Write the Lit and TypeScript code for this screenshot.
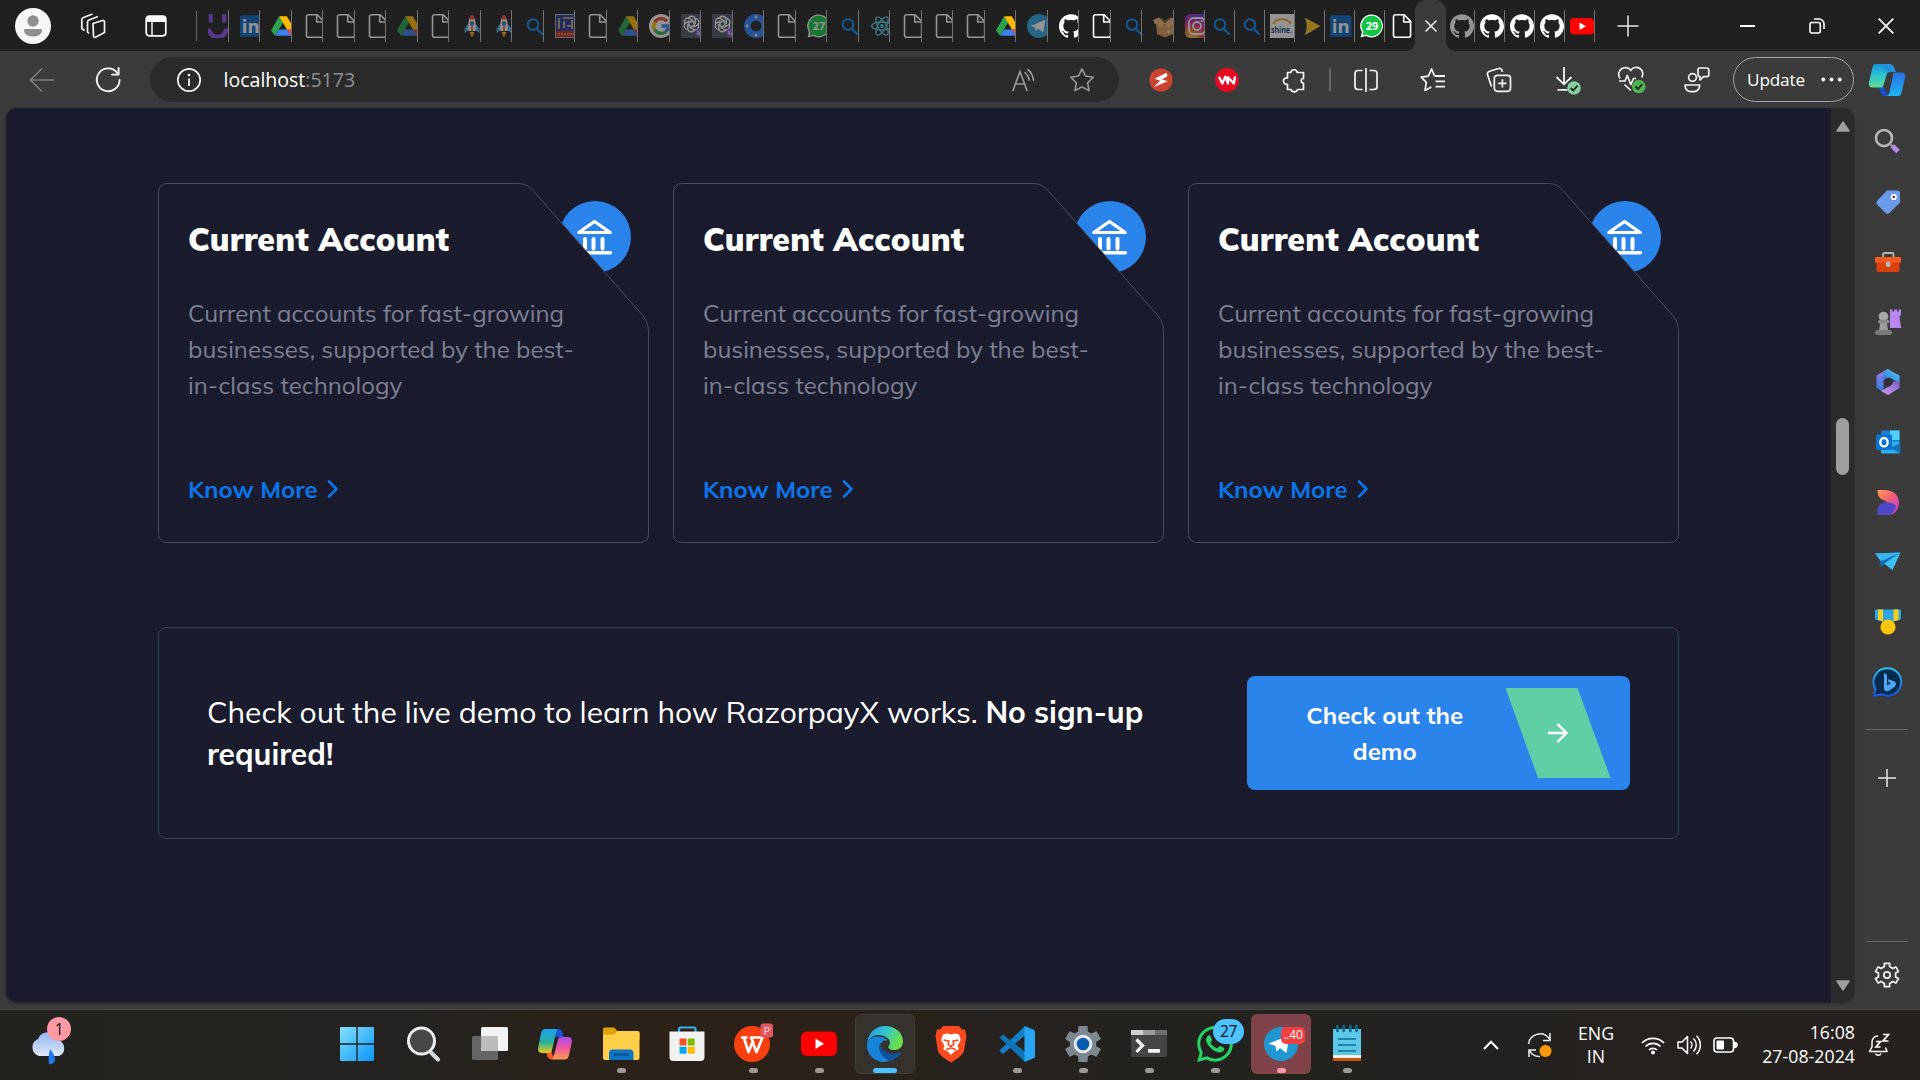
import { LitElement, html, css, svg, nothing } from "lit";
import { customElement, property } from "lit/decorators.js";

/* ---------- icon helpers ---------- */

const ic = (w: number, h: number, body: unknown, vb = `0 0 ${w} ${h}`) =>
  html`<svg class="ic" width=${w} height=${h} viewBox=${vb} fill="none">${body}</svg>`;

const gearPath = (c: number, outer: number, inner: number, n: number, wide = 0.3) => {
  const pts: string[] = [];
  const step = (Math.PI * 2) / n;
  for (let i = 0; i < n; i++) {
    const a = i * step - Math.PI / 2;
    const ring: [number, number][] = [
      [a - step * (0.5 - wide * 0.62), inner],
      [a - step * wide * 0.62, outer],
      [a + step * wide * 0.62, outer],
      [a + step * (0.5 - wide * 0.62), inner],
    ];
    for (const [t, r] of ring) pts.push(`${(c + r * Math.cos(t)).toFixed(2)} ${(c + r * Math.sin(t)).toFixed(2)}`);
  }
  return `M${pts.join("L")}Z`;
};

const GITHUB =
  "M12 .297c-6.63 0-12 5.373-12 12 0 5.303 3.438 9.8 8.205 11.385.6.113.82-.258.82-.577 0-.285-.01-1.04-.015-2.04-3.338.724-4.042-1.61-4.042-1.61C4.422 18.07 3.633 17.7 3.633 17.7c-1.087-.744.084-.729.084-.729 1.205.084 1.838 1.236 1.838 1.236 1.07 1.835 2.809 1.305 3.495.998.108-.776.417-1.305.76-1.605-2.665-.3-5.466-1.332-5.466-5.93 0-1.31.465-2.38 1.235-3.22-.135-.303-.54-1.523.105-3.176 0 0 1.005-.322 3.3 1.23.96-.267 1.98-.399 3-.405 1.02.006 2.04.138 3 .405 2.28-1.552 3.285-1.23 3.285-1.23.645 1.653.24 2.873.12 3.176.765.84 1.23 1.91 1.23 3.22 0 4.61-2.805 5.625-5.475 5.92.42.36.81 1.096.81 2.22 0 1.606-.015 2.896-.015 3.286 0 .315.21.69.825.57C20.565 22.092 24 17.592 24 12.297c0-6.627-5.373-12-12-12";
const WHATSAPP =
  "M17.472 14.382c-.297-.149-1.758-.867-2.03-.967-.273-.099-.471-.148-.67.15-.197.297-.767.966-.94 1.164-.173.199-.347.223-.644.075-.297-.15-1.255-.463-2.39-1.475-.883-.788-1.48-1.761-1.653-2.059-.173-.297-.018-.458.13-.606.134-.133.298-.347.446-.52.149-.174.198-.298.298-.497.099-.198.05-.371-.025-.52-.075-.149-.669-1.612-.916-2.207-.242-.579-.487-.5-.669-.51-.173-.008-.371-.01-.57-.01-.198 0-.52.074-.792.372-.272.297-1.04 1.016-1.04 2.479 0 1.462 1.065 2.875 1.213 3.074.149.198 2.096 3.2 5.077 4.487.709.306 1.262.489 1.694.625.712.227 1.36.195 1.871.118.571-.085 1.758-.719 2.006-1.413.248-.694.248-1.289.173-1.413-.074-.124-.272-.198-.57-.347m-5.421 7.403h-.004a9.87 9.87 0 01-5.031-1.378l-.361-.214-3.741.982.998-3.648-.235-.374a9.86 9.86 0 01-1.51-5.26c.001-5.45 4.436-9.884 9.888-9.884 2.64 0 5.122 1.03 6.988 2.898a9.825 9.825 0 012.893 6.994c-.003 5.45-4.437 9.884-9.885 9.884m8.413-18.297A11.815 11.815 0 0012.05 0C5.495 0 .16 5.335.157 11.892c0 2.096.547 4.142 1.588 5.945L.057 24l6.305-1.654a11.882 11.882 0 005.683 1.448h.005c6.554 0 11.89-5.335 11.893-11.893a11.821 11.821 0 00-3.48-8.413z";

const waTab = (n: string) => svg`
  <path d="M12 .5A11.5 11.5 0 1 1 6 22.1L.6 23.6 1.9 18A11.5 11.5 0 0 1 12 .5Z" fill="#fff"/>
  <path d="M12 1.8A10.2 10.2 0 1 1 6.2 20.6L2.4 21.8 3.4 17.8A10.2 10.2 0 0 1 12 1.8Z" fill="#12c443"/>
  <text x="12" y="15.8" text-anchor="middle" class="t b" font-size="11" fill="#fff">${n}</text>`;

const petal = (n: number, f: (a: number) => unknown) => Array.from({ length: n }, (_, i) => f((360 / n) * i));

/* favicons on a 24 x 24 grid */
const FAV: Record<string, unknown> = {
  smile: svg`<path d="M.8.2H4.800V8.500H.8ZM14 .2h4.300v8.300H14Z" fill="#8352f0"/><path d="M1 14.500A8.500 8.500 0 0 0 18.200 14.500" stroke="#8352f0" stroke-width="4.500"/>`,
  linkedin: svg`<rect x="0" y="1.300" width="21.500" height="21.500" rx="1.600" fill="#0a66c2"/><text x="10.700" y="18.800" text-anchor="middle" class="t b" font-size="18.500" fill="#fff">in</text>`,
  drive: svg`<path d="M8.200 2.200 0 16.200 4 21.800 12.300 8.200Z" fill="#2ba24c"/><path d="M8.200 2.200H15.800L24 16.200H16.300Z" fill="#ffba00"/><path d="M4.200 21.800 8 15.500H24L20 21.800Z" fill="#3b7ff0"/><path d="M15.900 15.500H24L20 21.800Z" fill="#ea4335"/>`,
  file: svg`<path d="M5.500.8H14.200L20.600 7.400V21.200A2 2 0 0 1 18.600 23.200H5.500A2 2 0 0 1 3.500 21.200V2.800A2 2 0 0 1 5.500.8ZM13.700 1V8H20.500" stroke="#fff" stroke-width="1.600" stroke-linejoin="round"/>`,
  rocket: svg`<path d="M8 10 4.600 14.500V19L9 16M16 10l3.400 4.500V19L15 16" fill="#4fb0ea"/><path d="M12 .8C8.500 4.500 7.600 9 8.400 17H15.600C16.400 9 15.500 4.500 12 .8Z" fill="#f2f6f9"/><path d="M12 .8C10.600 2.300 9.700 3.800 9.200 5.400H14.800C14.300 3.800 13.400 2.300 12 .8Z" fill="#ff4630"/><circle cx="12" cy="9.500" r="2.200" fill="#2e7db5"/><path d="M12 11.500v6" stroke="#ff4630" stroke-width="1.600"/><path d="M9.500 18H14.500L12 23.600Z" fill="#ffae2b"/>`,
  search: svg`<circle cx="10" cy="10.500" r="5.300" stroke="#0f8af5" stroke-width="2"/><path d="M14 14.800 19 20" stroke="#0f8af5" stroke-width="2.400" stroke-linecap="round"/>`,
  crest: svg`<rect x=".5" y=".5" width="22" height="23" fill="#27389b" stroke="#aab" stroke-width="1"/><path d="M4 4v11M8 4h10M9 7v7M12 12h6M17 6v9" stroke="#d9c16f" stroke-width="1.600"/><path d="M1 17H22v6H1Z" fill="#c02a20"/><path d="M3 20H20" stroke="#d8a33a" stroke-width="1.400" stroke-dasharray="2 1"/>`,
  google: svg`<circle cx="12" cy="12" r="12" fill="#fff"/><path d="M17.800 7.300A7.500 7.500 0 0 0 5.800 8" stroke="#ea4335" stroke-width="3.400"/><path d="M5.800 8A7.500 7.500 0 0 0 5.700 15.800" stroke="#fbbc05" stroke-width="3.400"/><path d="M5.700 15.800A7.500 7.500 0 0 0 16.800 17.700" stroke="#34a853" stroke-width="3.400"/><path d="M16.800 17.700A7.500 7.500 0 0 0 19.400 12H12.500" stroke="#4285f4" stroke-width="3.400"/>`,
  gpt: svg`<rect width="24" height="24" fill="#4d5566"/>${petal(6, (a) => svg`<path d="M7.200 4.800A3.800 3.800 0 0 1 14.300 4.600L14.300 9.200 10.500 7.200" stroke="#fff" stroke-width="1.300" transform="rotate(${a} 10.500 10)"/>`)}<circle cx="18.500" cy="18.500" r="4" fill="#8a5bd8"/><path d="M17 17v3h3" stroke="#fff" stroke-width="1"/>`,
  wheel: svg`<circle cx="12" cy="12" r="8.600" stroke="#2f80ff" stroke-width="6.600"/>${petal(4, (a) => svg`<circle cx="12" cy="3" r="1.400" fill="#d6e6ff" transform="rotate(${a} 12 12)"/>`)}`,
  wa27: waTab("27"),
  wa29: waTab("29"),
  react: svg`<circle cx="12" cy="12" r="2" fill="#58c4dc"/>${petal(3, (a) => svg`<ellipse cx="12" cy="12" rx="10.300" ry="4" stroke="#58c4dc" stroke-width="1.400" transform="rotate(${a / 2} 12 12)"/>`)}`,
  telegram: svg`<circle cx="12" cy="12" r="12" fill="#2ca5e0"/><path d="M3.600 12 18.500 5.800 16.200 18.600 11.200 14.800 8.800 17.200 8.300 13.500Z" fill="#fff"/>`,
  github: svg`<path d=${GITHUB} fill="#fff"/>`,
  box: svg`<path d="M3 8.500 12 11 21 8.500 20 20 12 23.600 4 20Z" fill="#d99a5c"/><path d="M3 8.500 6.500 3 12 6.500 17.500 3 21 8.500 12 11Z" fill="#8a5a2e"/><path d="M0 6 5.500 3.500 12 9.500 9 13.500 1.500 9.500ZM24 6 18.500 3.500 12 9.500 15 13.500 22.500 9.500Z" fill="#ecb97d"/><path d="M13.500 17.500 15.500 15.500 17.500 17.500 15.500 20Z" fill="#e8d2b5"/>`,
  instagram: svg`<defs><radialGradient id="ig" cx=".25" cy="1.050" r="1.150"><stop offset="0" stop-color="#ffd95a"/><stop offset=".3" stop-color="#fa7a24"/><stop offset=".6" stop-color="#d6249f"/><stop offset="1" stop-color="#5b3fdc"/></radialGradient></defs><rect width="24" height="24" rx="5.500" fill="url(#ig)"/><rect x="4" y="4" width="16" height="16" rx="4.500" stroke="#fff" stroke-width="1.800"/><circle cx="12" cy="12" r="4" stroke="#fff" stroke-width="1.800"/><circle cx="16.800" cy="7.200" r="1.100" fill="#fff"/>`,
  shine: svg`<rect width="26" height="24" fill="#fff"/><path d="M3 10A11 11 0 0 1 21 10" stroke="#f5a623" stroke-width="2"/><text x="1" y="18.600" class="t b" font-size="9.500" textLength="21" lengthAdjust="spacingAndGlyphs" fill="#223a78">shine.</text>`,
  arrow: svg`<path d="M4.500 3.500 20.500 12 4.500 21.500C7.500 15.500 7.500 9 4.500 3.500Z" fill="#ffc421"/>`,
  youtube: svg`<rect x="0" y="4" width="24" height="16.500" rx="4" fill="#f00"/><path d="M9.500 8.500 16 12.200 9.500 16Z" fill="#fff"/>`,
};

/* a leading "*" marks a tab that is awake */
const TABS_A = "smile linkedin *drive file file file drive file rocket rocket search crest file drive google gpt gpt wheel file wa27 search react file file file *drive telegram *github *file search box instagram".split(" ");
const TABS_B = "search search shine arrow linkedin *wa29 *file".split(" ");
const TABS_C = "github *github *github *github *youtube".split(" ");

const W = "#f4f4f4";

/* toolbar icons */
const TB = {
  back: ic(26, 26, svg`<path d="M25 13H2M13 1.500 1.500 13 13 24.500" stroke="#7f7f7f" stroke-width="1.600"/>`),
  refresh: ic(28, 28, svg`<path d="M23.500 7.200A11.400 11.400 0 1 0 25.600 14" stroke="${W}" stroke-width="1.900" stroke-linecap="round"/><path d="M24.600 2V8.600H18" stroke="${W}" stroke-width="1.900" stroke-linecap="round" stroke-linejoin="round"/>`),
  info: ic(26, 26, svg`<circle cx="13" cy="13" r="11.200" stroke="${W}" stroke-width="1.700"/><path d="M13 11.500V19" stroke="${W}" stroke-width="1.800"/><circle cx="13" cy="8" r="1.300" fill="${W}"/>`),
  aloud: ic(26, 26, svg`<path d="M2 23.500 9 4.500 16 23.500M4.500 17H13.500" stroke="#9b9b9b" stroke-width="1.600" stroke-linecap="round"/><path d="M14 5.500Q17.500 8.500 18.300 13M16.800 2.500Q21.500 6 22.600 13.500" stroke="#9b9b9b" stroke-width="1.600" stroke-linecap="round"/>`),
  star: ic(26, 26, svg`<path d="M13 1.800 16.500 9 24.300 10.200 18.700 15.700 20 23.600 13 19.900 6 23.600 7.300 15.700 1.700 10.200 9.500 9Z" stroke="#9b9b9b" stroke-width="1.600" stroke-linejoin="round"/>`),
  bolt: ic(24, 24, svg`<circle cx="12" cy="12" r="11.600" fill="#cb4331"/><path d="M17.500 4.800 5.500 10.800 11.200 12.800 4.800 19 18.800 13.300 13 11.400 18.500 8Z" fill="#fff"/>`),
  vn: ic(24, 24, svg`<circle cx="12" cy="12" r="11.900" fill="#e60a20"/><path d="M4 8.800 7.300 15.500 10.300 8.800 13 15.500V9.200L18.800 15.500 20 8.500" stroke="#fff" stroke-width="2.300" stroke-linejoin="round"/>`),
  puzzle: ic(26, 26, svg`<path d="M6.500 5.500H9.700A3.300 3.300 0 0 1 16.200 5.500H22.500V11.500A2 2 0 0 0 22.500 16V22.500H16.500A3.400 3.400 0 0 1 10 22.500H6.500V17.300A3.300 3.300 0 1 1 6.500 10.900Z" stroke="${W}" stroke-width="1.700" stroke-linejoin="round"/>`),
  split: ic(26, 26, svg`<path d="M13 1V25M9.500 3.500H5A3 3 0 0 0 2 6.500V19.500A3 3 0 0 0 5 22.500H9.500M16.500 3.500H21A3 3 0 0 1 24 6.500V19.500A3 3 0 0 1 21 22.500H16.500" stroke="${W}" stroke-width="1.700"/>`),
  fav: ic(26, 26, svg`<path d="M15.500 8.800 12.600 2 9.300 9.200 2.200 10.200 7.300 15.400 6 23.500 12.300 20" stroke="${W}" stroke-width="1.700" stroke-linejoin="round"/><path d="M15.500 9H26M16.500 14.300H26M16.500 19.600H26" stroke="${W}" stroke-width="1.800"/>`),
  coll: ic(26, 26, svg`<rect x="8.300" y="8.300" width="16.200" height="16" rx="3" stroke="${W}" stroke-width="1.700"/><path d="M16.400 12.200V20.500M12.200 16.300H20.500" stroke="${W}" stroke-width="1.700"/><path d="M5.500 19.500 1.600 8A3 3 0 0 1 3.500 4.200L12.500 1.500A2.600 2.600 0 0 1 16 3.500L16.500 5" stroke="${W}" stroke-width="1.700"/>`),
  down: ic(28, 30, svg`<path d="M12 2V19M4.500 12 12 19.300 19.500 12M5.500 24.800H15.500" stroke="${W}" stroke-width="1.800"/><circle cx="22" cy="23" r="6.800" fill="#85cf9f"/><path d="M18.600 23 21.200 25.500 25.600 20.700" stroke="#222" stroke-width="1.800"/>`),
  heart: ic(29, 30, svg`<path d="M3 13.500A6.200 6.200 0 0 1 13.800 5.300 6.200 6.200 0 0 1 24.700 12.500M13.800 25.500 7.500 19.500" stroke="${W}" stroke-width="1.700"/><path d="M2 16H8L10.300 10.500 13.800 19.500 16.500 13.500H19" stroke="${W}" stroke-width="1.700" stroke-linejoin="round"/><circle cx="21.800" cy="21.500" r="6.800" fill="#4fb054"/><path d="M18.500 21.500 21 24 25.300 19.200" stroke="#222" stroke-width="1.800"/>`),
  people: ic(28, 28, svg`<circle cx="9.500" cy="11.500" r="3.900" stroke="${W}" stroke-width="1.700"/><path d="M2.200 19H16.500V20A5.500 5.500 0 0 1 11 25.600H8A5.500 5.500 0 0 1 2.200 20Z" stroke="${W}" stroke-width="1.700"/><path d="M16.500 2H24A1.800 1.800 0 0 1 25.800 4V8.800A1.800 1.800 0 0 1 24 10.700H20.500L17 14V10.500A1.800 1.800 0 0 1 15 8.800V4A1.800 1.800 0 0 1 16.500 2Z" stroke="${W}" stroke-width="1.700" stroke-linejoin="round"/>`),
  copilot: ic(38, 34, svg`<defs><linearGradient id="cpa" x1="0" y1="0" x2="0" y2="1"><stop offset="0" stop-color="#1496dc"/><stop offset=".5" stop-color="#2fc3d0"/><stop offset="1" stop-color="#62dd92"/></linearGradient><linearGradient id="cpb" x1="0" y1="0" x2="0" y2="1"><stop offset="0" stop-color="#2a6fe0"/><stop offset="1" stop-color="#1fb6f5"/></linearGradient></defs>
    <path d="M11 24H16L20 33H17C13 33 12.500 29 11 24Z" fill="#1c4fd0"/><path d="M8 1H21C25 1 26.500 5 27.500 9H22C20 9 19 10 18.500 12L15.500 22C15 24 14 24.500 12 24.500H5C1 24.500.4 22 1.200 18.500L4.500 4.500C5 2 6 1 8 1Z" fill="url(#cpa)"/><path d="M8 1H21C25 1 26.500 5 27.500 9H22C20 9 16 4 8 1Z" fill="#2293da"/><path d="M26 9.500H33C37 9.500 37.600 12 36.800 15.500L33.500 29.500C33 32 32 33 30 33H17.500C20 33 21 31 21.500 29L25 12C25 10.500 25 9.500 26 9.500Z" fill="url(#cpb)"/>`),
};

/* browser sidebar icons, 30 x 30 */
const SIDE = [
  svg`<circle cx="11" cy="11" r="8" stroke="#b9b9b9" stroke-width="2.600"/><path d="M17 17 20 20" stroke="#8d8d8d" stroke-width="2.500"/><path d="M19.500 19 25 24.500" stroke="#b78bec" stroke-width="5"/>`,
  svg`<path d="M14 3.500H24.500A2.500 2.500 0 0 1 27 6V15.500L16.500 26A3 3 0 0 1 12.500 26L4.500 18A3 3 0 0 1 4.500 13.500Z" fill="#6a9bea"/><circle cx="20.800" cy="10" r="2.200" fill="#3b3b3b" stroke="#fff" stroke-width="1.800"/>`,
  svg`<path d="M10 10V7.500A1.500 1.500 0 0 1 11.500 6H19A1.500 1.500 0 0 1 20.500 7.500V10" stroke="#b5b5b5" stroke-width="1.800"/><path d="M3.500 14H26.500V23A2 2 0 0 1 24.500 25H5.500A2 2 0 0 1 3.500 23Z" fill="#d9430b"/><path d="M3 10H27A1 1 0 0 1 28 11V15.500H2V11A1 1 0 0 1 3 10Z" fill="#f7581c"/><rect x="12.800" y="14.500" width="4.600" height="5.500" rx="2" fill="#b9b9b9"/>`,
  svg`<path d="M17 2.500H19.500V4.500H21.300V2.500H24V4.500H25.800V2.500H28V8L26.500 9.500 27.500 17.500 28.500 21H17Z" fill="#b888ee"/><circle cx="10.500" cy="9.500" r="4.800" fill="#a6a6a6"/><path d="M8 12H13.300L15 23H6Z" fill="#9d9d9d"/><rect x="5" y="13" width="11.500" height="3.500" rx="1.700" fill="#8b8b8b"/><rect x="2" y="23" width="17" height="5" rx="2.500" fill="#7a7a7a"/>`,
  svg`<defs><linearGradient id="m0" x1="0" y1="0" x2="0" y2="1"><stop offset="0" stop-color="#a777e0"/><stop offset="1" stop-color="#2f7de6"/></linearGradient><linearGradient id="m1" x1="0" y1="1" x2="1" y2="0"><stop offset="0" stop-color="#2565d8"/><stop offset="1" stop-color="#54d7f5"/></linearGradient><linearGradient id="m2" x1="0" y1="1" x2="1" y2="0"><stop offset="0" stop-color="#d19bf0"/><stop offset="1" stop-color="#7c5ac8"/></linearGradient></defs><path d="M3.500 8.500 14.500 2 17 3V10L10.500 14V22.500L8.500 24 3.500 20.500Z" fill="url(#m0)"/><path d="M14.500 2.200 26.500 8.500V16L20 12.500 14.500 9.500 10.500 13V5Z" fill="url(#m1)"/><path d="M26.500 14V21L15 28 8 24 18.500 18 20.500 14.500Z" fill="url(#m2)"/><circle cx="15" cy="15" r="4.200" fill="#303038"/>`,
  svg`<rect x="8" y="3.500" width="18.500" height="22" rx="1.500" fill="#1a7fd0"/><path d="M17 3.500H26.500V13H17Z" fill="#4fd0fa"/><path d="M8 14.500 26.500 14.500V26.500H8Z" fill="#2cb1f0"/><path d="M27.500 16 17 21 27.500 26.500Z" fill="#156fb9"/><rect x="3" y="7.500" width="16" height="15.500" rx="1.700" fill="#0a72cf"/><ellipse cx="11" cy="15.200" rx="3.700" ry="4.200" stroke="#fff" stroke-width="2.400"/>`,
  svg`<defs><linearGradient id="d1" x1="0" y1="0" x2="1" y2="1"><stop offset="0" stop-color="#ff9a52"/><stop offset=".5" stop-color="#f2597a"/><stop offset="1" stop-color="#b13cf0"/></linearGradient></defs><path d="M4.500 3H12C20 3 26 8 26 15.500 26 23 21 28 14.500 28 22 24 16 14.500 10 13 6 11.500 4.500 8 4.500 3Z" fill="url(#d1)"/><path d="M4.500 28V22.500C5 17 10 14.500 16 15.500 20 16 22.500 17.500 23 19 22 24 18 28 14.500 28Z" fill="#4f47c8"/>`,
  svg`<path d="M2 6.500 27.500 5.500 13 16Z" fill="#2196e8"/><path d="M6 20 8 12.500 27.500 5.500 12 17.500Z" fill="#1565b4"/><path d="M27.500 5.500 19.500 23 11 16.500Z" fill="#3bc0f2"/><path d="M2 6.500 8 14.500 27.500 5.500Z" fill="#37b5f1"/>`,
  svg`<path d="M3 2.500H27A1 1 0 0 1 28 3.500V11.500A2 2 0 0 1 26 13L15 16 4 13A2 2 0 0 1 2 11.500V3.500A1 1 0 0 1 3 2.500Z" fill="#2aa5e6"/><path d="M5 2.500H10V14.500L5 13ZM20.500 2.500H25.500V13L20.500 14.500Z" fill="#f8cf1c"/><circle cx="15" cy="20" r="7.600" fill="#fdc60a"/>`,
  svg`<defs><linearGradient id="bg1" x1="0" y1="0" x2="0" y2="1"><stop offset="0" stop-color="#27c2f2"/><stop offset="1" stop-color="#1b56de"/></linearGradient></defs><path d="M14.500 1.200A13.700 13.700 0 1 1 8.500 27.200L1 28.700 2.500 22A13.700 13.700 0 0 1 14.500 1.200Z" fill="#062b4e" stroke="url(#bg1)" stroke-width="1.900"/><path d="M11 6 14 7.500V18.500L18 16.300 15.500 15 14.700 12 21.500 14.500C23.500 15.500 23.200 18.500 21.500 20L15.500 24C13.500 25 11 23.500 11 21.500Z" fill="#4fa6f6"/>`,
];

/* taskbar icons, 38 x 44 */
const t = {
  start: svg`<defs><linearGradient id="w1" x1="0" y1="0" x2="1" y2="1"><stop offset="0" stop-color="#84e0fb"/><stop offset="1" stop-color="#0a95f8"/></linearGradient></defs><path d="M2 6A1 1 0 0 1 3 5H18.300V21.300H2ZM19.700 5H35A1 1 0 0 1 36 6V21.300H19.700ZM2 22.700H18.300V39H3A1 1 0 0 1 2 38ZM19.700 22.700H36V38A1 1 0 0 1 35 39H19.700Z" fill="url(#w1)"/>`,
  search: svg`<path d="M27.500 31 34 37.500" stroke="#d3d6da" stroke-width="4.200" stroke-linecap="round"/><circle cx="17.500" cy="19" r="13" fill="#4a4645" stroke="#eceef0" stroke-width="3"/>`,
  view: svg`<rect x="11" y="5" width="27" height="24" rx="1.500" fill="#f3f3f3"/><rect x="2" y="14" width="26" height="24" rx="1.500" fill="#686868" opacity=".95"/><path d="M11 14H28V29H11Z" fill="#bcbcbc"/>`,
  copilot: svg`<defs><linearGradient id="c1" x1="0" y1="0" x2="0" y2="1"><stop offset="0" stop-color="#199ff0"/><stop offset=".55" stop-color="#28b2a0"/><stop offset="1" stop-color="#f3c816"/></linearGradient><linearGradient id="c2" x1="0" y1="0" x2="0" y2="1"><stop offset="0" stop-color="#a94df0"/><stop offset=".5" stop-color="#f0589e"/><stop offset="1" stop-color="#ff9d4a"/></linearGradient></defs><path d="M17 7H22C26 7 26.500 10 27.500 15H20Z" fill="#1b54d8"/><path d="M9.500 28H15L18 37.500H15.500C11.500 37.500 11 33 9.500 28Z" fill="#f5562f"/><path d="M9 7H20C22 7 20.500 10 19.500 13L16 28C15.300 30.500 14 31 12 31H6C2 31 1.500 28 2.500 24L5 11C6 8 7 7 9 7Z" fill="url(#c1)"/><path d="M25 15H32C36 15 36.500 18 35.500 22L33 33C32 36.500 31 37.500 29 37.500H17.500C16 37.500 17.500 35 18.500 31L22 18C22.500 16 23 15 25 15Z" fill="url(#c2)"/>`,
  explorer: svg`<path d="M1 7A1.500 1.500 0 0 1 2.500 5.500H12L15.500 9H35.500A2 2 0 0 1 37.500 11V18H1Z" fill="#e0a008"/><path d="M1 12.500H12L15.500 9H35.500A2 2 0 0 1 37.500 11V36A2 2 0 0 1 35.500 38H3A2 2 0 0 1 1 36Z" fill="#ffcf48"/><path d="M7 31A3.500 3.500 0 0 1 10.500 27.500H28A3.500 3.500 0 0 1 31.500 31V38H7Z" fill="#0f74c4"/><path d="M12 32.500H26.500" stroke="#0a4b8d" stroke-width="2"/>`,
  store: svg`<path d="M11 12V7A1.500 1.500 0 0 1 12.500 5.500H26A1.500 1.500 0 0 1 27.500 7V12" stroke="#34b1ee" stroke-width="2.200"/><path d="M1.500 9.500H36.500V35A4 4 0 0 1 32.500 39H5.500A4 4 0 0 1 1.500 35Z" fill="#f2f2f2"/><path d="M11.500 16.500H18.500V23.500H11.500Z" fill="#f25022"/><path d="M19.700 16.500H26.700V23.500H19.700Z" fill="#7fba00"/><path d="M11.500 24.700H18.500V31.700H11.500Z" fill="#00a4ef"/><path d="M19.700 24.700H26.700V31.700H19.700Z" fill="#ffb900"/>`,
  wps: svg`<circle cx="18" cy="22" r="18" fill="#f8400e"/><path d="M7 15.500H13.500M10 16 14.500 30 18.500 20 22.500 30 28.500 15.500H17L19.500 21" stroke="#fff" stroke-width="2.700" stroke-linejoin="round"/><rect x="26.500" y="1.500" width="12.500" height="14" rx="2.500" fill="#e0555f"/><text x="32.700" y="12.800" text-anchor="middle" class="t" font-size="11" fill="#ffd9dc">P</text>`,
  yt: svg`<rect x="1" y="9.500" width="36" height="24.500" rx="6" fill="#f00"/><path d="M15.500 16.500 24 21.700 15.500 27Z" fill="#fff"/>`,
  edge: svg`<defs><linearGradient id="e1" x1="0" y1="0" x2="1" y2=".35"><stop offset="0" stop-color="#2490dc"/><stop offset=".5" stop-color="#2fc3d4"/><stop offset="1" stop-color="#6be04c"/></linearGradient></defs><path d="M1 24C1 12 8.500 4 19 4 29.500 4 37 11 37 19.500 37 25.500 32.500 28 28 28 24 28 22.300 26.300 22.300 25 22.300 24 24 23 24 20.500 24 17 19 13 12.500 13 6 13 1.500 17.500 1 24Z" fill="url(#e1)"/><path d="M1 22.500C1.500 17 6.500 14.500 11.500 14.500 17.500 14.500 21 17 22 18.500 18 17 13.500 20.500 13.500 26 13.500 31.500 19 36 26 36 23 39 20.500 40 18.500 40 8 40 .5 32 1 22.500Z" fill="#1784d8"/><path d="M14 21.500C11 30 17.500 37.500 25 39 30 37 34 33.500 35.500 30.800 35.800 30 35 29.700 34 30.200 28 33 17 31.500 15 24.500Z" fill="#1250a0"/>`,
  brave: svg`<path d="M11 4H27L30 7.500 33 7.500 34.500 14 32 29C31 33 24 37.500 19 40.500 14 37.500 7 33 6 29L3.500 14 5 7.500 8 7.500Z" fill="#fb4a1e"/><g transform="translate(3.400 4) scale(.82)"><path d="M9.500 10 15 9 19 10.500 23 9 28.500 10 31 17 27 24 28.500 28.500 23 31 19 35.500 15 31 9.500 28.500 11 24 7 17Z" fill="#fff"/><path d="M10 17 16.500 18.500 15.500 22.500 19 25 22.500 22.500 21.500 18.500 28 17M13 29 19 26.500 25 29" stroke="#fb4a1e" stroke-width="2"/></g>`,
  vscode: svg`<path d="M1.500 28.500 27 4 36.500 8 27.500 13 5 32Z" fill="#1380c8"/><path d="M1.500 15.500 5 12.500 28 30.500 27 40Z" fill="#0d74b8"/><path d="M26.500 4.200 36 8.200A1.500 1.500 0 0 1 37 9.500V34.500A1.500 1.500 0 0 1 36 36L26.500 40Z" fill="#27a5f2"/>`,
  settings: svg`<path d=${gearPath(19, 17.500, 12.500, 6, 0.32)} fill="#7d8790" stroke="#7d8790" stroke-width="2" stroke-linejoin="round" transform="translate(0 3)"/><circle cx="19" cy="22" r="7.800" fill="#0b5cad" stroke="#e5e9ed" stroke-width="3"/>`,
  term: svg`<rect x="1" y="8" width="36" height="27" rx="1.500" fill="#444"/><path d="M1 8H13V13H1Z" fill="#cfcfcf"/><path d="M13 8H25V13H13Z" fill="#9c9c9c"/><path d="M25 8H37V13H25Z" fill="#6f6f6f"/><path d="M6.500 17.500 12.500 23.500 6.500 30" stroke="#f0f0f0" stroke-width="3.300"/><rect x="18" y="27" width="12" height="3.800" rx=".8" fill="#f4f4f4"/>`,
  wa: svg`<g transform="translate(1 4) scale(1.500)"><path d=${WHATSAPP} fill="#25d366"/></g>`,
  tg: svg`<circle cx="19" cy="22" r="17" fill="#2197d1"/><path d="M6.500 21.500 27.500 13.500 24.500 31 18 26 14.500 29.500 13.500 24Z" fill="#fff"/>`,
  note: svg`<rect x="5" y="35" width="28" height="4" rx=".5" fill="#c2570c"/><path d="M5 33H33V36H5Z" fill="#f1efe8"/><path d="M5 7H33V33H5Z" fill="#5cc8e8"/><path d="M10 17H28M10 23H28M10 29H28" stroke="#0a6d92" stroke-width="1.700"/><path d="M9.500 4V9M15.700 4V9M22.300 4V9M28.500 4V9" stroke="#0b6d93" stroke-width="2.600" stroke-linecap="round"/>`,
};

interface Task { icon: unknown; run?: boolean; state?: "active" | "alert"; badge?: string }
const TASKS: Task[] = [
  { icon: t.start }, { icon: t.search }, { icon: t.view }, { icon: t.copilot },
  { icon: t.explorer, run: true }, { icon: t.store }, { icon: t.wps, run: true }, { icon: t.yt, run: true },
  { icon: t.edge, run: true, state: "active" }, { icon: t.brave }, { icon: t.vscode, run: true },
  { icon: t.settings, run: true }, { icon: t.term, run: true }, { icon: t.wa, run: true, badge: "27" },
  { icon: t.tg, run: true, state: "alert", badge: "..40" }, { icon: t.note, run: true },
];

const base = css`
  * { box-sizing: border-box; }
  .ic { display: block; flex: none; overflow: visible; }
  .t { font-family: "Open Sans", "Noto Sans", sans-serif; }
  .b { font-weight: 700; }
`;

@customElement("tab-strip")
class TabStrip extends LitElement {
  static styles = [base, css`
    :host { display: flex; height: 51px; background: #202020; align-items: center; }
    .cell { display: flex; justify-content: center; align-items: center; flex: none; }
    .avatar { width: 66px; }
    .spaces { width: 54px; }
    .acts { width: 76px; padding-right: 4px; }
    .sep { flex: none; width: 1.300px; height: 30px; background: #666; }
    .tab { flex: none; display: flex; align-items: center; height: 32px; width: 31.500px; padding-left: 10.800px; border-right: 1.300px solid #737373; overflow: hidden; }
    .tab .ic { overflow: hidden; }
    .slim { width: 30px; padding-left: 5px; }
    .last { border-right-color: transparent; }
    .dim .ic { opacity: .52; }
    .active { position: relative; flex: none; width: 31px; height: 51px; display: flex; align-items: center; justify-content: center; background: #3b3b3b; border-radius: 11px 11px 0 0; margin-right: -1px; }
    .active::before, .active::after { content: ""; position: absolute; bottom: 0; width: 9px; height: 9px; }
    .active::before { right: 100%; background: radial-gradient(circle at 0 0, transparent 8.500px, #3b3b3b 9px); }
    .active::after { left: 100%; background: radial-gradient(circle at 100% 0, transparent 8.500px, #3b3b3b 9px); }
    .plus { width: 66px; }
    .min { width: 70px; margin-left: 51px; }
    .win { width: 69px; }
  `];
  tab(name: string, slim = false, last = false) {
    const awake = name[0] === "*";
    return html`<div class="tab ${slim ? "slim" : ""} ${awake ? "" : "dim"} ${last ? "last" : ""}">${ic(24, 24, FAV[awake ? name.slice(1) : name])}</div>`;
  }
  render() {
    return html`
      <div class="cell avatar">${ic(36, 36, svg`<circle cx="18" cy="18" r="18" fill="#f7f7f7"/><circle cx="18" cy="13" r="5.700" fill="#8f8f8f"/><path d="M9.500 21.500H26.500V22.500C26.500 26 23 28 18 28S9.500 26 9.500 22.500Z" fill="#8f8f8f" stroke="#8f8f8f" stroke-width="1" stroke-linejoin="round"/>`)}</div>
      <div class="cell spaces">${ic(26, 26, svg`<path d="M13 10.500 22.500 7.500A1.500 1.500 0 0 1 24.500 9V19.500L16 24A1.500 1.500 0 0 1 13.500 22.500Z" stroke="${W}" stroke-width="1.700" stroke-linejoin="round"/><path d="M9 20.500 7.500 19V9A2.500 2.500 0 0 1 9 7L18 3.500M4.500 17.500 1.800 15.500V7A2.500 2.500 0 0 1 3.500 4.500L12.500 1" stroke="${W}" stroke-width="1.700"/>`)}</div>
      <div class="cell acts">${ic(22, 22, svg`<rect x="1.200" y="1.200" width="19.600" height="19.600" rx="3" stroke="#fff" stroke-width="1.700"/><path d="M1 4A3 3 0 0 1 4 1H18A3 3 0 0 1 21 4V7H1Z" fill="#fff"/><path d="M7 7V21" stroke="#fff" stroke-width="1.400"/>`)}</div>
      <div class="sep"></div>
      ${TABS_A.map((n) => this.tab(n))}
      ${TABS_B.map((n, i) => this.tab(n, true, i === TABS_B.length - 1))}
      <div class="active">${ic(12, 12, svg`<path d="M.5.5 11.500 11.500M11.500.5.5 11.500" stroke="#eee" stroke-width="1.500"/>`)}</div>
      ${TABS_C.map((n) => this.tab(n, true))}
      <div class="cell plus">${ic(22, 22, svg`<path d="M11 .5V21.500M.5 11H21.500" stroke="#e8e8e8" stroke-width="1.500"/>`)}</div>
      <div class="cell min">${ic(15, 2, svg`<path d="M0 1H15" stroke="#fff" stroke-width="2"/>`)}</div>
      <div class="cell win">${ic(16, 16, svg`<rect x="1" y="4.500" width="10.300" height="10.500" rx="2" stroke="#fff" stroke-width="1.600"/><path d="M5 1H10A5 5 0 0 1 15 6V11" stroke="#fff" stroke-width="1.600"/>`)}</div>
      <div class="cell win">${ic(16, 16, svg`<path d="M.7.7 15.300 15.300M15.300.7.7 15.300" stroke="#fff" stroke-width="1.700"/>`)}</div>`;
  }
}

@customElement("address-row")
class AddressRow extends LitElement {
  static styles = [base, css`
    :host { display: flex; align-items: center; height: 57px; background: #3b3b3b; }
    .cell { display: flex; justify-content: center; align-items: center; flex: none; height: 100%; }
    .w83 { width: 83px; } .w66 { width: 66px; } .w67 { width: 67px; } .w50 { width: 50px; } .w64 { width: 64px; }
    .field { flex: none; width: 969px; height: 45px; border-radius: 22.500px; background: #2b2b2b; display: flex; align-items: center; padding: 0 24.500px 0 26px; margin: 0 9px 0 17px; gap: 32px; }
    .url { flex: 1; font: 400 19.600px/45px "Open Sans", "Noto Sans", sans-serif; color: #fff; letter-spacing: -.03px; margin-left: -10.500px; }
    .port { color: #8f8f8f; }
    .rule { flex: none; width: 1.500px; height: 23px; background: #666; margin: 0 2px; }
    .update { flex: none; width: 121px; height: 45px; margin-left: 4px; border: 1.500px solid #a5a5a5; border-radius: 22.500px; display: flex; align-items: center; justify-content: space-between; padding: 0 11px 0 13.500px; font: 400 17.200px/42px "Open Sans", "Noto Sans", sans-serif; color: #fff; letter-spacing: -.15px; }
  `];
  render() {
    const c = (cls: string, i: unknown) => html`<div class="cell ${cls}">${i}</div>`;
    return html`
      ${c("w83", TB.back)}${c("w50", TB.refresh)}
      <div class="field">${TB.info}<div class="url">localhost<span class="port">:5173</span></div>${TB.aloud}${TB.star}</div>
      ${c("w66", TB.bolt)}${c("w66", TB.vn)}${c("w67", TB.puzzle)}
      <div class="rule"></div>
      ${c("w66", TB.split)}${c("w67", TB.fav)}${c("w67", TB.coll)}${c("w66", TB.down)}${c("w66", TB.heart)}${c("w64", TB.people)}
      <div class="update"><span>Update</span>${ic(21, 5, svg`<circle cx="2.300" cy="2.500" r="1.900" fill="#fff"/><circle cx="10.500" cy="2.500" r="1.900" fill="#fff"/><circle cx="18.700" cy="2.500" r="1.900" fill="#fff"/>`)}</div>
      ${c("w66", TB.copilot)}`;
  }
}

@customElement("account-card")
class AccountCard extends LitElement {
  @property() heading = "Current Account";
  static styles = [base, css`
    :host { display: block; position: relative; width: 491px; height: 360px; padding: 32px 30px 0; font-family: Mulish, Nunito, Lato, sans-serif; }
    .frame { position: absolute; inset: 0; }
    .frame, h3, p, a { display: block; margin: 0; }
    h3, p, a { position: relative; }
    h3 { font-size: 32px; line-height: 48px; font-weight: 900; letter-spacing: .23px; color: #fff; }
    p { margin-top: 32px; width: 400px; font-size: 24px; line-height: 36px; color: #7e8092; }
    a { display: flex; align-items: center; gap: 9px; margin-top: 68px; font-size: 24px; line-height: 36px; font-weight: 700; color: #0d75ea; text-decoration: none; }
  `];
  render() {
    return html`
      <svg class="frame" width="491" height="360" viewBox="0 0 491 360" fill="none">
        <defs><clipPath id="cut"><path d="M368.500 0 490.500 138.800V0Z"/></clipPath></defs>
        <g clip-path="url(#cut)">
          <circle cx="437" cy="54" r="36" fill="#2b84ea"/>
          <path d="M420.800 49.500 436.500 38.500 452.200 49.500Z" stroke="#fff" stroke-width="3.200" stroke-linejoin="round"/>
          <path d="M427 56V65.500M435.500 56V65.500M444.500 56V65.500" stroke="#fff" stroke-width="4" stroke-linecap="round"/>
          <path d="M421 69.700H452.300" stroke="#fff" stroke-width="3.600" stroke-linecap="round"/>
        </g>
        <path d="M8.500.5H360C366 .5 371 3 375 7.500L483.500 131C488 136 490.500 142 490.500 149V351.500A8 8 0 0 1 482.500 359.500H8.500A8 8 0 0 1 .5 351.500V8.500A8 8 0 0 1 8.500.5Z" stroke="#494d64"/>
      </svg>
      <h3>${this.heading}</h3>
      <p>Current accounts for fast-growing businesses, supported by the best-in-class technology</p>
      <a>Know More ${ic(12, 18, svg`<path d="M2 1.500 9.500 9 2 16.500" stroke="#0d75ea" stroke-width="2.600" stroke-linecap="round" stroke-linejoin="round"/>`)}</a>`;
  }
}

@customElement("web-page")
class WebPage extends LitElement {
  static styles = [base, css`
    :host { display: block; flex: 1; background: #1a1c2e; padding: 75px 0 0 152px; font-family: Mulish, Nunito, Lato, sans-serif; color: #fff; }
    .cards { display: flex; gap: 24px; }
    .demo { display: flex; align-items: center; justify-content: space-between; width: 1521px; height: 212px; margin-top: 84px; padding: 0 48px; border: 1px solid #334155; border-radius: 8px; }
    .pitch { width: 960px; font-size: 30px; line-height: 42px; }
    .pitch b { font-weight: 700; }
    .go { display: flex; align-items: center; width: 383px; height: 114px; padding: 0 19.500px 0 17px; border-radius: 8px; background: #2b84ea; }
    .go span { flex: 1; text-align: center; font-size: 24px; line-height: 36px; font-weight: 700; }
    .slant { flex: none; width: 105px; height: 90px; background: #61cfa6; clip-path: polygon(0 0, 68.600% 0, 100% 100%, 31% 100%); display: flex; align-items: center; justify-content: center; }
  `];
  render() {
    return html`
      <div class="cards"><account-card></account-card><account-card></account-card><account-card></account-card></div>
      <div class="demo">
        <div class="pitch">Check out the live demo to learn how RazorpayX works. <b>No sign-up required!</b></div>
        <div class="go"><span>Check out the<br />demo</span>
          <div class="slant">${ic(20, 20, svg`<path d="M0 10H18.500M9.500 1 18.500 10 9.500 19" stroke="#fff" stroke-width="2.400"/>`)}</div>
        </div>
      </div>`;
  }
}

@customElement("side-rail")
class SideRail extends LitElement {
  static styles = [base, css`
    :host { display: flex; flex-direction: column; align-items: center; width: 66px; padding-top: 4px; }
    .item { height: 60px; display: flex; align-items: center; justify-content: center; }
    .item .ic { margin-left: 1px; }
    .rule { width: 42px; height: 1px; background: #666; margin: 17px 0 18px; }
    .grow { flex: 1; }
    .gear { height: 67px; padding-bottom: 1px; }
    .low { margin: 0; }
    .plus { height: 60px; }
    .gear .ic, .plus .ic { margin-left: 0; }
  `];
  render() {
    return html`
      ${SIDE.map((s) => html`<div class="item">${ic(30, 30, s)}</div>`)}
      <div class="rule"></div>
      <div class="item plus">${ic(18, 18, svg`<path d="M9 0V18M0 9H18" stroke="#e8e8e8" stroke-width="1.500"/>`)}</div>
      <div class="grow"></div>
      <div class="rule low"></div>
      <div class="item gear">${ic(26, 26, svg`<path d=${gearPath(13, 12, 8.800, 6, 0.34)} stroke="${W}" stroke-width="1.700" stroke-linejoin="round"/><circle cx="13" cy="13" r="3.200" stroke="${W}" stroke-width="1.700"/>`)}</div>`;
  }
}

@customElement("task-bar")
class TaskBar extends LitElement {
  static styles = [base, css`
    :host { display: flex; align-items: center; height: 71px; border-top: 1px solid #484644; background: linear-gradient(90deg, #22231f 0, #242321 20%, #2b2119 33%, #2c2118 40%, #26221f 52%, #22221f 66%, #242220 78%, #27211e 100%); color: #fff; font: 400 17.700px/24px "Open Sans", "Noto Sans", sans-serif; }
    .weather { position: relative; width: 324px; padding: 2px 0 0 28px; }
    .task { position: relative; width: 66px; height: 70px; flex: none; display: flex; align-items: center; justify-content: center; }
    .plate { width: 60px; height: 60px; border-radius: 6px; display: flex; align-items: center; justify-content: center; margin-top: -2px; }
    .active .plate { background: #35312c; border: 1px solid #403c37; }
    .alert .plate { background: #80434a; }
    .dot { position: absolute; left: 50%; bottom: 7px; width: 9px; height: 5px; margin-left: -4.500px; border-radius: 3px; background: #9c9995; }
    .active .dot { width: 24px; margin-left: -12px; background: #4cc2ff; }
    .alert .dot { background: #ff99a4; }
    .badge { position: absolute; top: 9px; left: 31px; width: 31px; height: 25px; border-radius: 13px; background: #4cc2ff; color: #111; text-align: center; font-size: 15.500px; line-height: 24px; letter-spacing: -.4px; }
    .alert .badge { top: 17px; left: 33px; width: 24px; height: 17px; border-radius: 5px; background: #f23f3f; color: #fff; font-size: 12px; line-height: 16px; letter-spacing: -.2px; }
    .badge.one { top: -7px; left: 47px; width: 24px; height: 24px; background: #ff99a4; }
    .cell { flex: none; display: flex; justify-content: center; align-items: center; }
    .tray { flex: 1; display: flex; align-items: center; justify-content: flex-end; padding-right: 30px; }
    .lang { width: 78px; text-align: center; line-height: 22.500px; margin-top: -1px; }
    .clock { text-align: right; width: 112px; margin: -3px 13px 0 0; letter-spacing: .05px; }
    .c64 { width: 64px; } .c34 { width: 34px; } .c36 { width: 36px; }
  `];
  render() {
    return html`
      <div class="weather">
        ${ic(40, 40, svg`<defs><linearGradient id="cl" x1="0" y1="0" x2="0" y2="1"><stop offset="0" stop-color="#8fb4ee"/><stop offset="1" stop-color="#dfe8f8"/></linearGradient></defs><path d="M11 33A9 9 0 0 1 10 16 10.500 10.500 0 0 1 30 17 8.500 8.500 0 0 1 31 33Z" fill="url(#cl)" transform="translate(0 -3)"/><path d="M22 23C25 27 27 30 27 34A4.800 4.800 0 0 1 21 38C20 33 21 27 22 23Z" fill="#1c7af2"/>`)}
        <div class="badge one">1</div>
      </div>
      ${TASKS.map((k) => html`<div class="task ${k.state ?? ""}">
        <div class="plate">${ic(38, 44, k.icon)}</div>
        ${k.run ? html`<div class="dot"></div>` : nothing}
        ${k.badge ? html`<div class="badge">${k.badge}</div>` : nothing}
      </div>`)}
      <div class="tray">
        <div class="cell c64">${ic(16, 10, svg`<path d="M1 9 8 1.700 15 9" stroke="#fff" stroke-width="2"/>`)}</div>
        <div class="cell c34">${ic(26, 26, svg`<path d="M1.500 12A11.500 11.500 0 0 1 22.500 7M23 1V8.500H16M2 25V18H9M2.500 18.500A11.500 11.500 0 0 0 13 24.500" stroke="#eee" stroke-width="1.500"/><circle cx="18.500" cy="19" r="6" fill="#ff9a0a"/>`)}</div>
        <div class="lang">ENG<br />IN</div>
        <div class="cell c36">${ic(24, 20, svg`<path d="M1 8A15.500 15.500 0 0 1 23 8M4.500 11.500A10.500 10.500 0 0 1 19.500 11.500M8 15A5.600 5.600 0 0 1 16 15" stroke="#fff" stroke-width="1.700"/><circle cx="12" cy="17.500" r="2" fill="#fff"/>`)}</div>
        <div class="cell c36">${ic(24, 20, svg`<path d="M1 7H5L10.500 1.500V18.500L5 13H1Z" stroke="#fff" stroke-width="1.500" stroke-linejoin="round"/><path d="M13.500 6.500A5 5 0 0 1 13.500 13.500M16.500 3.500A9 9 0 0 1 16.500 16.500M19.500.8A13 13 0 0 1 19.500 19.200" stroke="#fff" stroke-width="1.500"/>`)}</div>
        <div class="cell c36">${ic(24, 16, svg`<rect x="1" y="1" width="19.500" height="14" rx="3" stroke="#fff" stroke-width="1.600"/><rect x="3.500" y="3.500" width="7.500" height="9" rx="1" fill="#fff"/><path d="M21.500 5.500A2.500 2.500 0 0 1 21.500 10.500Z" fill="#fff" stroke="#fff" stroke-width="1.500"/>`)}</div>
        <div class="clock">16:08<br />27-08-2024</div>
        ${ic(22, 24, svg`<path d="M10 3C6 3 4 6 4 9.500V14L1.500 18.500H19L17.500 14.500" stroke="#fff" stroke-width="1.500" stroke-linejoin="round"/><path d="M7.500 20.500A3 3 0 0 0 13 20.500" stroke="#fff" stroke-width="1.500"/><path d="M8 8.500H12.500L8 14H12.500M15 1.500H20.500L15 8H20.500" stroke="#fff" stroke-width="1.700"/>`)}
      </div>`;
  }
}

@customElement("app-root")
class AppRoot extends LitElement {
  static styles = [base, css`
    :host { display: flex; flex-direction: column; width: 1920px; height: 1080px; overflow: hidden; background: #3b3b3b; }
    .body { display: flex; flex: 1; padding-left: 6px; }
    .view { display: flex; width: 1848px; height: 894px; border-radius: 11px; overflow: hidden; box-shadow: 0 1px 3px rgba(0, 0, 0, .45); }
    .scroll { width: 23px; background: #2b2b2b; display: flex; flex-direction: column; align-items: center; padding: 13px 0 11px; }
    .thumb { width: 13px; height: 57px; border-radius: 6.500px; background: #9f9f9f; margin: 285.500px 0 auto; }
  `];
  render() {
    return html`
      <tab-strip></tab-strip>
      <address-row></address-row>
      <div class="body">
        <div class="view">
          <web-page></web-page>
          <div class="scroll">
            ${ic(14, 11, svg`<path d="M7 1 13 10H1Z" fill="#9f9f9f" stroke="#9f9f9f" stroke-width="1.500" stroke-linejoin="round"/>`)}
            <div class="thumb"></div>
            ${ic(14, 11, svg`<path d="M7 10 13 1H1Z" fill="#9f9f9f" stroke="#9f9f9f" stroke-width="1.500" stroke-linejoin="round"/>`)}
          </div>
        </div>
        <side-rail></side-rail>
      </div>
      <task-bar></task-bar>`;
  }
}
